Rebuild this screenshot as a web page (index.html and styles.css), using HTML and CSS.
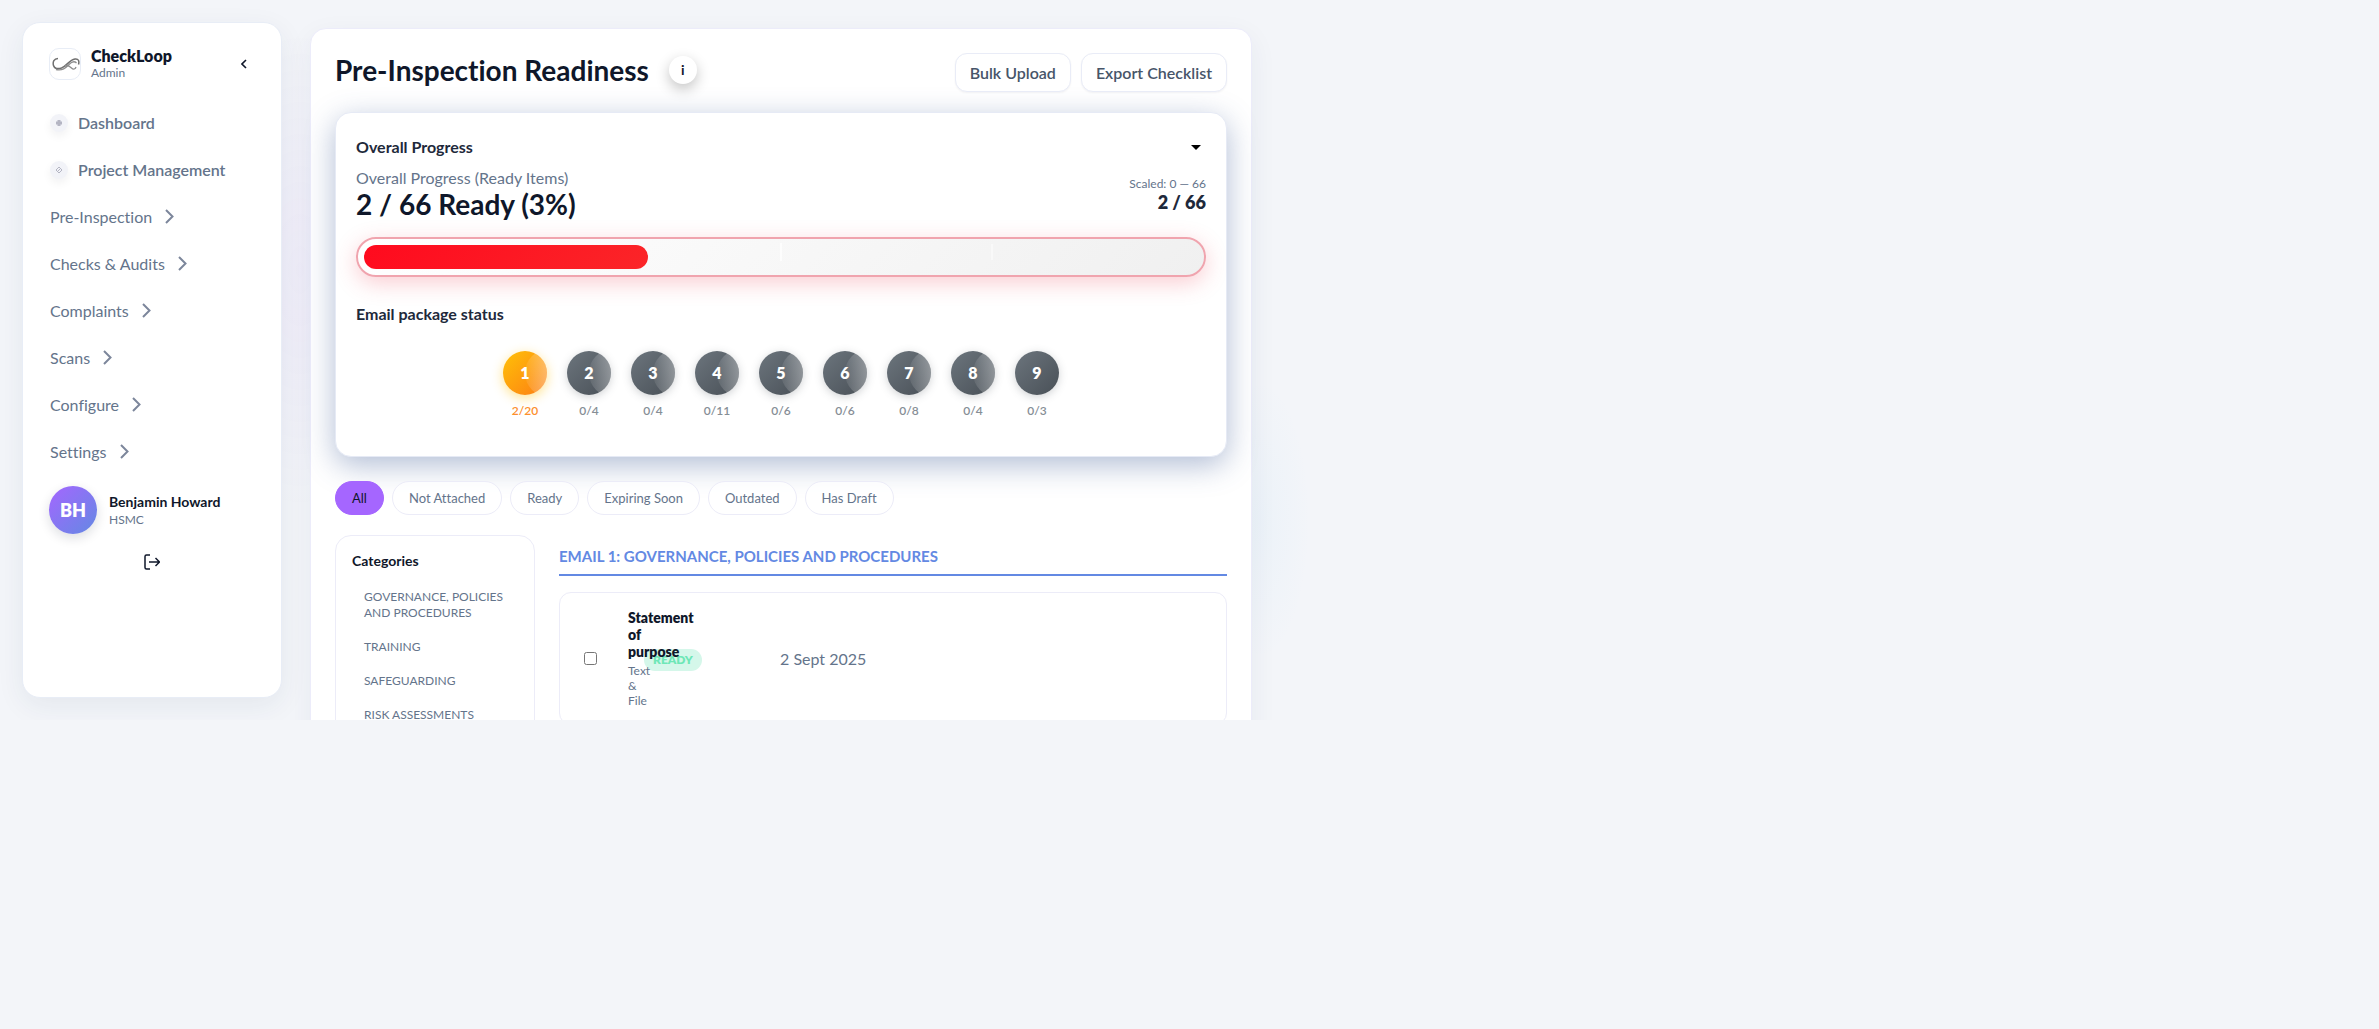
FILE: index.html
```html
<!DOCTYPE html>
<html lang="en">
<head>
<meta charset="utf-8">
<title>CheckLoop – Pre-Inspection Readiness</title>
<link rel="stylesheet" href="styles.css">
</head>
<body>
<div class="app">
  <aside class="sidebar">
    <div class="brand">
      <span class="brand-logo">
        <svg viewBox="0 0 30 30" width="30" height="30" fill="none" aria-hidden="true">
          <path d="M8 9.500C4 9.500 2.500 13 3.500 16.500c1 3.500 4.500 3.500 8 2.500C17 17 19 11 25 10c3.500-.5 4.500 2 3.500 5.500" stroke="#6f6f6f" stroke-width="1.500"/>
          <path d="M6 20.500c7 1.500 10-2 13-5 2.500-2.500 5.500-3.500 7.500-1.500M14.500 17c3-1.500 5 0 7 2s4 1 4.500-1" stroke="#8d8d8d" stroke-width="1.300"/>
        </svg>
      </span>
      <div class="brand-text">
        <div class="brand-name">CheckLoop</div>
        <div class="small muted">Admin</div>
      </div>
      <button class="collapse" aria-label="Collapse sidebar">
        <svg viewBox="0 0 6 10" width="6" height="10" fill="none"><path d="M5 1 1 5l4 4" stroke="#0f172a" stroke-width="1.6"/></svg>
      </button>
    </div>
    <nav class="nav">
      <a class="nav-item strong" href="#"><span class="nav-dot"><svg viewBox="0 0 8 8" width="8" height="8"><path d="M2.500 1h3v1.500H7v3H5.500V7h-3V5.500H1v-3h1.500z" fill="#b4b5c3"/></svg></span>Dashboard</a>
      <a class="nav-item strong" href="#"><span class="nav-dot"><svg viewBox="0 0 8 8" width="8" height="8" fill="none"><path d="M4 1l3 3-3 3-3-3zM2.500 5.500l3-3" stroke="#b4b5c3"/></svg></span>Project Management</a>
      <a class="nav-item" href="#">Pre-Inspection<svg class="chev" viewBox="0 0 9 15"><path d="M1 1l6.500 6.500L1 14"/></svg></a>
      <a class="nav-item" href="#">Checks &amp; Audits<svg class="chev" viewBox="0 0 9 15"><path d="M1 1l6.500 6.500L1 14"/></svg></a>
      <a class="nav-item" href="#">Complaints<svg class="chev" viewBox="0 0 9 15"><path d="M1 1l6.500 6.500L1 14"/></svg></a>
      <a class="nav-item" href="#">Scans<svg class="chev" viewBox="0 0 9 15"><path d="M1 1l6.500 6.500L1 14"/></svg></a>
      <a class="nav-item" href="#">Configure<svg class="chev" viewBox="0 0 9 15"><path d="M1 1l6.500 6.500L1 14"/></svg></a>
      <a class="nav-item" href="#">Settings<svg class="chev" viewBox="0 0 9 15"><path d="M1 1l6.500 6.500L1 14"/></svg></a>
    </nav>
    <div class="user">
      <span class="avatar">BH</span>
      <div>
        <div class="user-name">Benjamin Howard</div>
        <div class="small muted">HSMC</div>
      </div>
    </div>
    <button class="logout" aria-label="Log out">
      <svg viewBox="0 0 16 16" width="16" height="16" fill="none" stroke="#0f172a" stroke-width="1.500"><path d="M6 1H2.500Q1 1 1 2.500v11Q1 15 2.500 15H6M5 8h10M11.500 4l4 4-4 4"/></svg>
    </button>
  </aside>

  <main class="main">
    <header class="page-head">
      <h1>Pre-Inspection Readiness</h1>
      <button class="info" aria-label="Information">i</button>
      <div class="head-actions">
        <button class="btn">Bulk Upload</button>
        <button class="btn">Export Checklist</button>
      </div>
    </header>

    <section class="card">
      <div class="card-head">
        <h2>Overall Progress</h2>
        <button class="toggle" aria-label="Toggle progress"></button>
      </div>
      <div class="summary">
        <div>
          <div class="summary-label">Overall Progress (Ready Items)</div>
          <div class="summary-value">2 / 66 Ready (3%)</div>
        </div>
        <div class="summary-side">
          <div class="small muted">Scaled: 0 — 66</div>
          <div class="summary-count">2 / 66</div>
        </div>
      </div>
      <div class="progress"><div class="progress-fill"></div></div>
      <h2>Email package status</h2>
      <ol class="steps">
        <li class="active"><button class="step">1</button>2/20</li>
        <li><button class="step">2</button>0/4</li>
        <li><button class="step">3</button>0/4</li>
        <li><button class="step">4</button>0/11</li>
        <li><button class="step">5</button>0/6</li>
        <li><button class="step">6</button>0/6</li>
        <li><button class="step">7</button>0/8</li>
        <li><button class="step">8</button>0/4</li>
        <li><button class="step">9</button>0/3</li>
      </ol>
    </section>

    <div class="filters">
      <button class="pill selected">All</button>
      <button class="pill">Not Attached</button>
      <button class="pill">Ready</button>
      <button class="pill">Expiring Soon</button>
      <button class="pill">Outdated</button>
      <button class="pill">Has Draft</button>
    </div>

    <div class="columns">
      <aside class="categories">
        <h3>Categories</h3>
        <a href="#">GOVERNANCE, POLICIES AND PROCEDURES</a>
        <a href="#">TRAINING</a>
        <a href="#">SAFEGUARDING</a>
        <a href="#">RISK ASSESSMENTS</a>
      </aside>
      <section class="list">
        <h2 class="list-title">EMAIL 1: GOVERNANCE, POLICIES AND PROCEDURES</h2>
        <article class="item">
          <input type="checkbox" id="item-1">
          <div class="item-text">
            <label for="item-1">Statement of purpose</label>
            <div class="item-kind">Text &amp; File</div>
            <span class="badge">READY</span>
          </div>
          <time datetime="2025-09-02">2 Sept 2025</time>
        </article>
      </section>
    </div>
  </main>
</div>
</body>
</html>
```
FILE: styles.css
```css
* { box-sizing: border-box; }

body {
  margin: 0;
  background: #f3f5f9;
  color: #0f172a;
  font-family: Lato, "Liberation Sans", sans-serif;
  font-size: 16px;
  font-variant-ligatures: none;
  line-height: 20px;
}

h1, h2, h3, ol { margin: 0; padding: 0; }
button { font: inherit; color: inherit; border: 0; padding: 0; background: none; cursor: pointer; }
a { color: inherit; text-decoration: none; }

.app {
  display: flex;
  align-items: flex-start;
  gap: 28px;
  height: 70vh;
  padding: 22px;
  overflow: hidden;
  background:
    radial-gradient(ellipse 120px 240px at 300px 270px, rgba(165, 102, 255, 0.06), transparent),
    radial-gradient(ellipse 50px 140px at 1260px 520px, rgba(99, 190, 240, 0.05), transparent);
}

.small { font-size: 12px; line-height: 16px; }
.muted { color: #64748b; }

.sidebar {
  display: flex;
  flex-direction: column;
  flex: 0 0 260px;
  height: 100%;
  padding: 24px 26px;
  background: #fff;
  border: 1px solid #e8edf6;
  border-radius: 18px;
  box-shadow: 0 8px 28px rgba(30, 50, 90, 0.07);
}

.brand { display: flex; align-items: center; gap: 10px; }
.brand-logo {
  display: flex;
  width: 32px;
  height: 32px;
  border: 1px solid #e8edf6;
  border-radius: 10px;
}
.brand-name { font-weight: 800; line-height: 18px; }
.collapse { display: flex; margin-left: auto; padding: 8px; }

.nav { display: flex; flex-direction: column; gap: 8px; padding-top: 22px; }
.nav-item {
  display: flex;
  align-items: center;
  height: 39px;
  padding-left: 1px;
  color: #64748b;
}
.strong { gap: 10px; font-weight: 600; }
.nav-dot {
  display: flex;
  align-items: center;
  justify-content: center;
  width: 18px;
  height: 18px;
  border-radius: 9px;
  background: #f2f3f8;
  box-shadow: 0 4px 10px rgba(15, 23, 42, 0.06);
}
.chev { width: 9px; height: 15px; margin-left: 13px; fill: none; stroke: #7c869b; stroke-width: 2; }

.user { display: flex; align-items: center; gap: 12px; padding-top: 15px; }
.avatar {
  display: flex;
  align-items: center;
  justify-content: center;
  width: 48px;
  height: 48px;
  border-radius: 24px;
  background: linear-gradient(135deg, #a566ff, #6389e3);
  box-shadow: 0 4px 12px rgba(15, 23, 42, 0.14);
  color: #fff;
  font-size: 18px;
  font-weight: 800;
}
.user-name { font-size: 14px; font-weight: 700; line-height: 20px; }
.logout { display: flex; align-self: center; padding: 20px; }

.main {
  flex: 0 1 942px;
  margin-top: 6px;
  padding: 24px;
  background: #fff;
  border: 1px solid #ececfa;
  border-radius: 16px;
  box-shadow: 0 8px 28px rgba(30, 50, 90, 0.06);
}

.page-head { display: flex; align-items: flex-start; }
h1 { font-size: 28px; font-weight: 700; line-height: 34px; }
.info {
  width: 28px;
  height: 28px;
  margin: 3px 0 0 20px;
  border-radius: 14px;
  background: #fff;
  box-shadow: 0 5px 14px rgba(0, 0, 0, 0.24);
  font-size: 14px;
  font-weight: 700;
}
.head-actions { display: flex; gap: 10px; margin-left: auto; }
.btn {
  height: 39px;
  padding: 0 14px;
  background: #fff;
  border: 1px solid #e9ecf7;
  border-radius: 12px;
  box-shadow: 0 1px 2px rgba(15, 23, 42, 0.05);
  color: #475569;
  font-weight: 600;
}

.card {
  margin-top: 20px;
  padding: 24px 20px 37px;
  background: #fff;
  border: 1px solid #e6eaf5;
  border-radius: 16px;
  box-shadow: 0 8px 30px rgba(60, 90, 150, 0.4);
}
h2 { color: #1e293b; font-size: 16px; font-weight: 700; line-height: 20px; }
.card-head { display: flex; align-items: center; justify-content: space-between; }
.toggle { padding: 5px; }
.toggle::before {
  content: "";
  display: block;
  border: 5px solid transparent;
  border-top-color: #000;
  border-bottom: 0;
}
.summary { display: flex; justify-content: space-between; align-items: center; padding: 11px 0 17px; }
.summary-label { color: #64748b; }
.summary-value { font-size: 28px; font-weight: 700; line-height: 32px; }
.summary-side { text-align: right; }
.summary-count { color: #1e293b; font-size: 18px; font-weight: 800; line-height: 20px; }

.progress {
  height: 40px;
  padding: 6px;
  border: 2px solid #f0a4ae;
  border-radius: 20px;
  background:
    linear-gradient(#fdfdfd, #fdfdfd) 50% 4px / 2px 18px no-repeat,
    linear-gradient(#f9f9f9, #f9f9f9) 75% 5px / 2px 16px no-repeat,
    linear-gradient(135deg, #fff, #f0f0f0);
  box-shadow: 0 6px 22px rgba(235, 60, 80, 0.26);
}
.progress-fill {
  width: 34%;
  height: 24px;
  border-radius: 12px;
  background: linear-gradient(135deg, #ff0a1e, #fb2528);
}
.progress + h2 { margin-top: 27px; }

.steps { display: flex; justify-content: center; gap: 20px; padding-top: 27px; list-style: none; }
.steps li {
  display: flex;
  flex-direction: column;
  align-items: center;
  gap: 8px;
  width: 44px;
  color: #868e96;
  font-size: 12px;
  font-weight: 600;
  line-height: 16px;
}
.steps .active { color: #fd8f2e; }
.step {
  position: relative;
  overflow: hidden;
  width: 44px;
  height: 44px;
  border-radius: 22px;
  background: linear-gradient(135deg, #6c757d, #495057);
  box-shadow: 0 2px 8px rgba(73, 80, 87, 0.25);
  color: #fff;
  font-size: 16px;
  font-weight: 800;
}
.active .step {
  background: linear-gradient(135deg, #ffc107, #fd7e14);
  box-shadow: 0 3px 12px rgba(255, 193, 7, 0.45);
}
/* Light sheen on every step that leads to another one */
li:not(:last-child) .step::after {
  content: "";
  position: absolute;
  top: -2px;
  left: 22px;
  width: 48px;
  height: 48px;
  border-radius: 24px;
  background: linear-gradient(90deg, rgba(255, 255, 255, 0.06), rgba(255, 255, 255, 0.36) 22px);
}

.filters { display: flex; gap: 8px; padding-top: 24px; }
.pill {
  height: 34px;
  padding: 0 16px;
  border: 1px solid #ececf8;
  border-radius: 17px;
  background: rgba(255, 255, 255, 0.7);
  color: #64748b;
  font-size: 13px;
}
.selected { border-color: #a566ff; background: #a566ff; color: #0f172a; }

.columns { display: grid; grid-template-columns: 200px 1fr; gap: 24px; padding-top: 20px; }
.categories {
  display: flex;
  flex-direction: column;
  gap: 18px;
  padding: 15px 16px;
  border: 1px solid #ececf8;
  border-radius: 16px;
}
h3 { font-size: 14px; font-weight: 700; line-height: 20px; }
.categories a { padding: 0 12px; color: #64748b; font-size: 12px; line-height: 16px; }

.list-title {
  padding: 11px 0 8px;
  border-bottom: 2px solid #6389e3;
  color: #6389e3;
  font-size: 15px;
}
.item {
  display: grid;
  grid-template-columns: 14px 122px 1fr;
  column-gap: 30px;
  align-items: center;
  margin-top: 16px;
  padding: 16px 24px;
  border: 1px solid #ececf8;
  border-radius: 12px;
}
.item input { width: 13px; height: 13px; margin: 0; }
.item-text {
  position: relative;
  isolation: isolate;
  font-size: 14px;
  font-weight: 800;
  line-height: 17px;
}
.item-text label { display: block; width: min-content; }
.item-kind { width: min-content; padding-top: 3px; color: #64748b; font-size: 12px; font-weight: 400; line-height: 15px; }
/* The status sits behind the title where the two meet */
.badge {
  position: absolute;
  z-index: -1;
  left: 16px;
  top: 40px;
  padding: 3px 9px;
  border-radius: 11px;
  background: #d5f7ea;
  color: #6ee7b7;
  font-size: 12px;
  line-height: 16px;
}
.item time { color: #64748b; }
```
